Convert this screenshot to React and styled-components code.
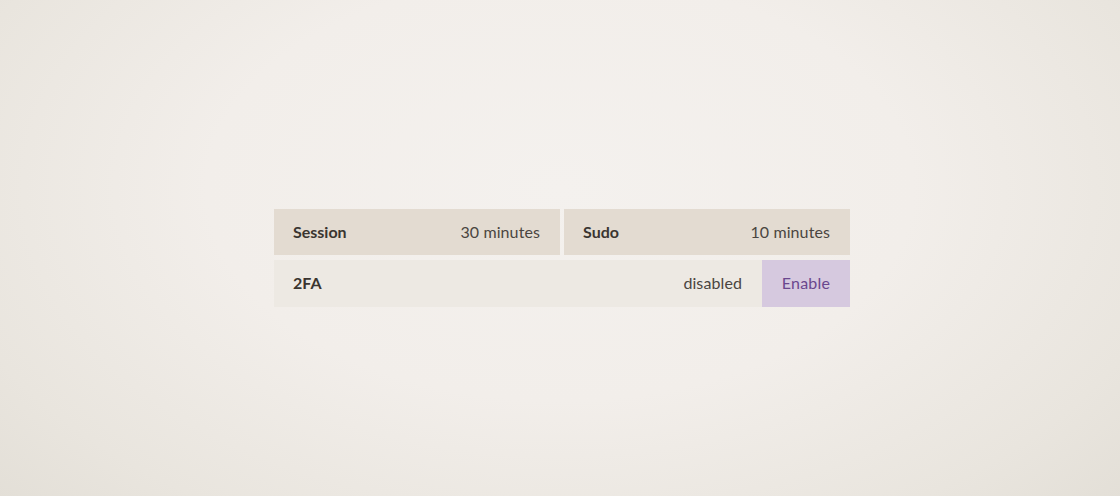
import React from 'react';
import styled, { createGlobalStyle } from 'styled-components';

const GlobalStyle = createGlobalStyle`
  html, body {
    margin: 0;
    height: 100%;
  }
  body {
    background: radial-gradient(ellipse 70% 95% at 50% 38%, #f4f1ee 0%, #f2eeea 45%, #e9e5de 80%, #e2ded6 100%);
    font-family: Lato, "Open Sans", sans-serif;
    -webkit-font-smoothing: antialiased;
  }
  #root {
    min-height: 100%;
  }
`;

const Page = styled.div`
  display: flex;
  justify-content: center;
  padding: 209px 0 0 4px;
  box-sizing: border-box;
  height: 496px;
`;

const Table = styled.div`
  width: 576px;
  display: flex;
  flex-direction: column;
  gap: 5px;
`;

const Row = styled.div`
  display: flex;
  gap: ${(props) => props.gap ?? 0}px;
`;

const Cell = styled.div`
  flex: 1;
  display: flex;
  align-items: center;
  justify-content: space-between;
  box-sizing: border-box;
  height: ${(props) => props.height ?? 46}px;
  padding: 0 20px 2px 19px;
  background-color: ${(props) => props.muted ? '#ede9e3' : '#e3dbd1'};
  font-size: 16px;
`;

const Label = styled.span`
  font-weight: 700;
  color: #3a3530;
`;

const Value = styled.span`
  font-weight: 400;
  color: #4a4540;
  letter-spacing: 0.1px;
`;

const EnableButton = styled.button`
  width: 88px;
  height: 47px;
  border: none;
  margin: 0;
  padding: 0 0 3px;
  background-color: #d6c9df;
  color: #6a478e;
  font-family: inherit;
  font-size: 16px;
  font-weight: 400;
  cursor: pointer;
  letter-spacing: 0.2px;

  &:hover {
    background-color: #cdbddb;
  }
`;

const App = () => (
  <>
    <GlobalStyle />
    <Page>
      <Table>
        <Row gap={4}>
          <Cell>
            <Label>Session</Label>
            <Value>30 minutes</Value>
          </Cell>
          <Cell>
            <Label>Sudo</Label>
            <Value>10 minutes</Value>
          </Cell>
        </Row>
        <Row>
          <Cell muted height={47}>
            <Label>2FA</Label>
            <Value>disabled</Value>
          </Cell>
          <EnableButton>Enable</EnableButton>
        </Row>
      </Table>
    </Page>
  </>
);

export default App;
